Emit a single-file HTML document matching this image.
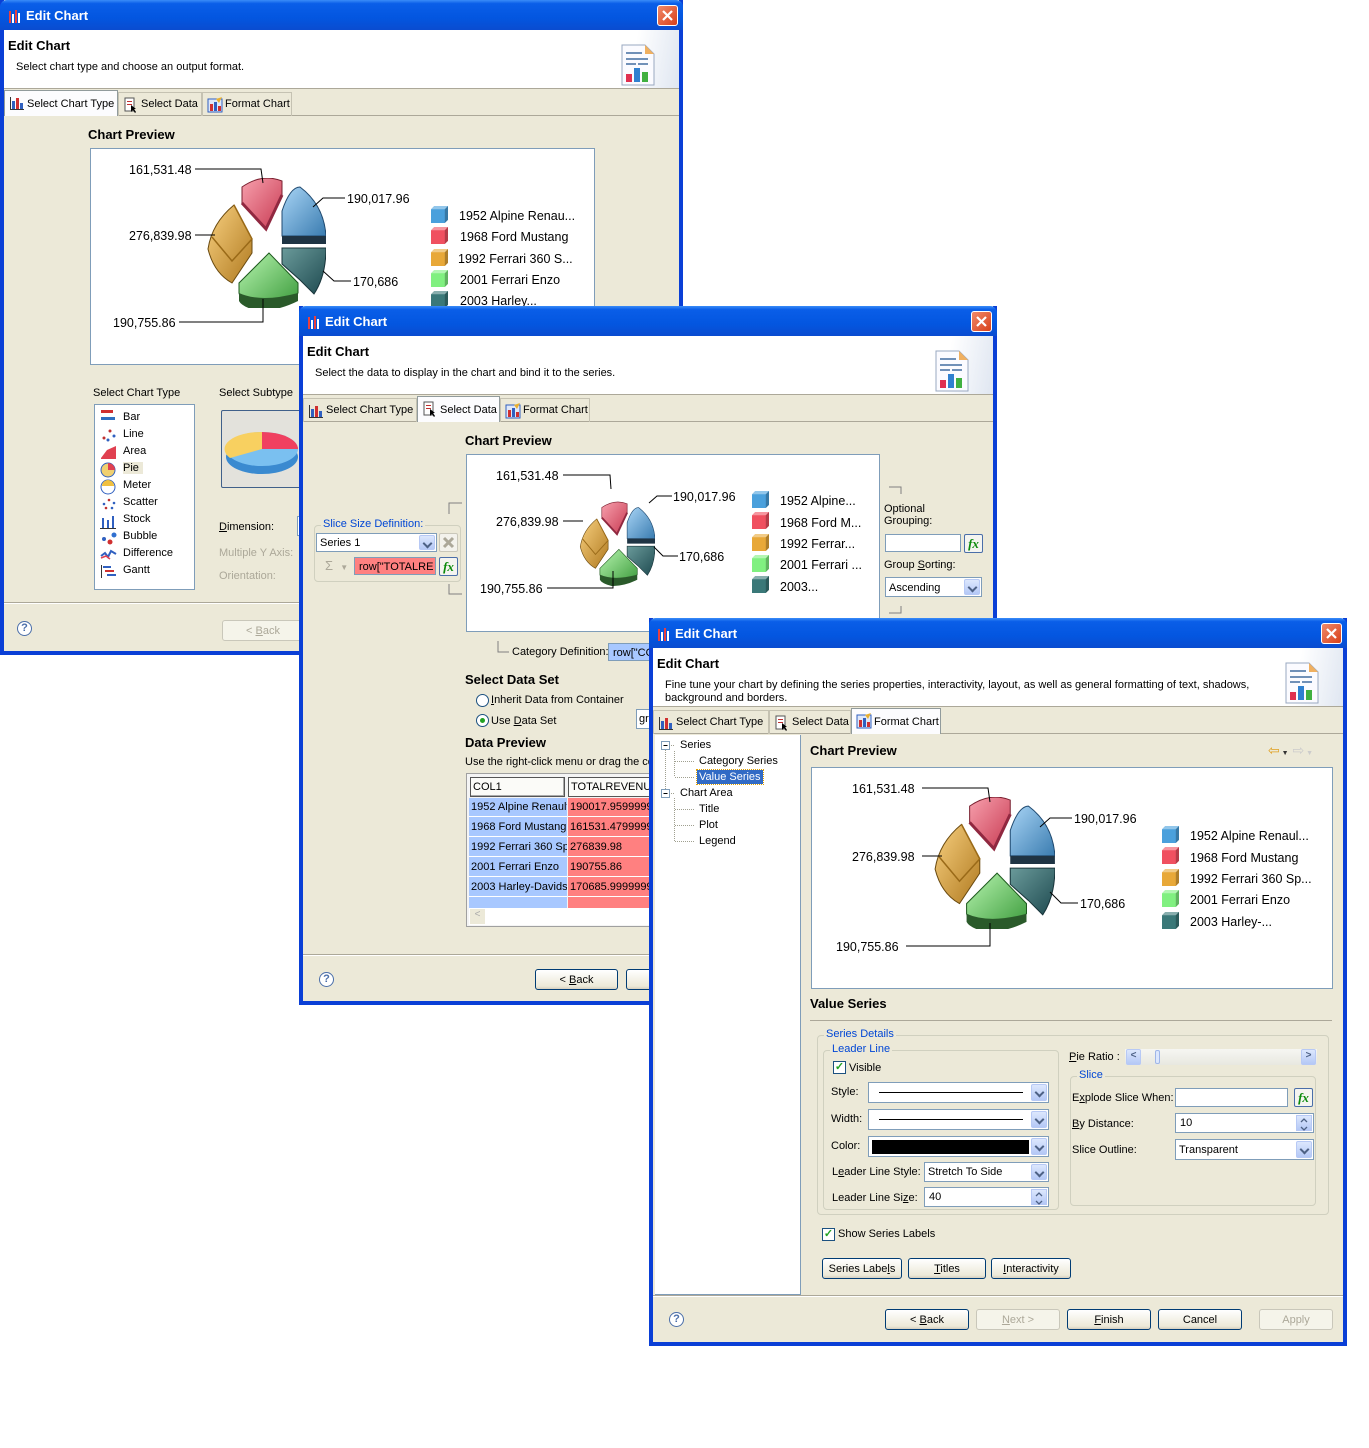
<!DOCTYPE html>
<html><head><meta charset="utf-8">
<style>
*{margin:0;padding:0;box-sizing:border-box}
body{width:1369px;height:1448px;background:#fff;position:relative;overflow:hidden;font-family:"Liberation Sans",sans-serif;font-size:11px;color:#000}
.a{position:absolute}
.win{position:absolute;background:#ece9d8;border:4px solid #0a3fd6;border-top:none;}
.tb{position:absolute;left:-4px;right:-4px;top:0;height:30px;background:linear-gradient(#3a8cf8 0,#0a5ee8 12%,#0356e0 60%,#0a4cd0 100%);border-radius:7px 7px 0 0;color:#fff;font-weight:bold;font-size:13px;}
.tb .t{position:absolute;left:26px;top:8px}
.tb .ic{position:absolute;left:8px;top:9px}
.cl{position:absolute;right:5px;top:5px;width:21px;height:21px;background:linear-gradient(135deg,#f08a6a,#d8401a);border:1px solid #fff;border-radius:3px}
.hd{position:absolute;left:0;right:0;top:30px;height:59px;background:#fff;border-bottom:1px solid #aca899}
.hd b{position:absolute;left:4px;top:8px;font-size:13px}
.hd span{position:absolute;left:12px;top:31px}
.hi{position:absolute;right:0;top:0;width:75px;height:58px;background:linear-gradient(100deg,#fff 40%,#dfe6f1 100%)}
.tabs{position:absolute;left:0;right:0;top:90px;height:26px;border-bottom:1px solid #aca899}
.tab{position:absolute;top:2px;height:24px;border:1px solid #c5c2b2;border-bottom:none;padding:5px 0 0 22px;white-space:nowrap}
.tab.on{top:0;height:26px;background:#fcfcfe;border-color:#919b9c;padding-top:7px}
.tab svg{position:absolute;left:4px;top:4px}
.bold{font-weight:bold;font-size:13px}
.box{position:absolute;background:#fff;border:1px solid #7f9db9}
.btn{position:absolute;height:21px;border:1px solid #003c74;border-radius:3px;background:linear-gradient(#fff,#ece9d8 85%,#d6d0c0);text-align:center;padding-top:4px}
.btn.dis{border-color:#c9c7ba;color:#aca899;background:#f5f4ea}
.dd{position:absolute;right:1px;top:1px;bottom:1px;width:16px;background:linear-gradient(#dce7fd,#b4c8f6);border:1px solid #b7c9f5;border-radius:2px}
.dd:after{content:"";position:absolute;left:4px;top:4px;width:5px;height:5px;border-right:2px solid #4d6185;border-bottom:2px solid #4d6185;transform:rotate(45deg)}
.sp{position:absolute;right:1px;top:1px;bottom:1px;width:16px;background:linear-gradient(#dce7fd,#b4c8f6);border:1px solid #b7c9f5}
.grp{position:absolute;border:1px solid #d0d0bf;border-radius:4px}
.grp>.lg{position:absolute;left:6px;top:-8px;background:#ece9d8;color:#0046d5;padding:0 2px}
.help{position:absolute;width:15px;height:15px;border:1px solid #4a6ea9;border-radius:50%;color:#4a6ea9;font-weight:bold;font-size:11px;text-align:center;line-height:13px;background:#fff}
.sep{position:absolute;left:0;right:0;height:2px;border-top:1px solid #aca899;border-bottom:1px solid #fff}
.fx{position:absolute;width:19px;height:19px;border:1px solid #4a6ea9;border-radius:2px;background:#f4f4f0;color:#0a8a0a;font-style:italic;font-weight:bold;font-family:"Liberation Serif",serif;font-size:13px;text-align:center;line-height:17px}
.chk{position:absolute;width:13px;height:13px;border:1px solid #1c5180;background:#fff;color:#21a121;font-size:11px;line-height:11px;text-align:center;font-weight:bold}
.cell{position:absolute;height:19px;padding:3px 2px;white-space:nowrap;overflow:hidden}
.gray{color:#aca899}
</style></head><body>

<svg width="0" height="0" style="position:absolute">
<defs>
<linearGradient id="gR" x1="0" y1="0" x2="1" y2="1"><stop offset="0" stop-color="#f7a0ad"/><stop offset="1" stop-color="#c83a52"/></linearGradient>
<linearGradient id="gB" x1="0" y1="0" x2="1" y2="1"><stop offset="0" stop-color="#a8d4f5"/><stop offset="1" stop-color="#3a7cb0"/></linearGradient>
<linearGradient id="gT" x1="0" y1="0" x2="1" y2="1"><stop offset="0" stop-color="#6a9a9a"/><stop offset="1" stop-color="#1e4a50"/></linearGradient>
<linearGradient id="gG" x1="0" y1="0" x2="1" y2="1"><stop offset="0" stop-color="#b8f5b0"/><stop offset="1" stop-color="#3a9a3a"/></linearGradient>
<linearGradient id="gO" x1="0" y1="0" x2="1" y2="1"><stop offset="0" stop-color="#f8d080"/><stop offset="1" stop-color="#b07a20"/></linearGradient>
<symbol id="pie" viewBox="-60 -65 120 130">
<g transform="translate(-2,-4)">
<path d="M-22,-52 Q-2,-66 18,-58 L18,-44 L2,-10 L-22,-36 Z" fill="url(#gR)" stroke="#7a2030" stroke-width="1"/>
<path d="M-22,-36 L2,-10 L18,-44" fill="none" stroke="#902840" stroke-width="3"/>
</g>
<g transform="translate(4,-2)">
<path d="M12,-5 L12,-30 Q20,-54 30,-54 Q54,-36 56,-5 Z" fill="url(#gB)" stroke="#204a70"/>
<path d="M12,-5 L56,-5 L56,3 L12,3 Z" fill="#1f3444"/>
</g>
<g transform="translate(4,3)">
<path d="M12,2 L56,2 Q56,30 44,48 L30,34 L12,18 Z" fill="url(#gT)" stroke="#18343a"/>
</g>
<g transform="translate(0,6)">
<path d="M3,4 L32,34 L32,44 Q15,60 -5,58 Q-25,54 -27,44 L-27,34 Z" fill="url(#gG)" stroke="#1e5a1e"/>
<path d="M-27,44 Q-5,54 32,44 L32,52 Q12,62 -8,62 Q-24,58 -27,52 Z" fill="#2a5a2a"/>
</g>
<g transform="translate(-6,0)">
<path d="M-8,-4 L-26,-38 Q-48,-20 -52,6 Q-46,30 -28,40 L-8,10 Z" fill="url(#gO)" stroke="#6a4a10"/>
<path d="M-26,-38 L-8,-4 L-28,18 L-48,-6" fill="none" stroke="#9a6a18" stroke-width="1.5"/>
</g>
</symbol>
<symbol id="cube" viewBox="0 0 16 16">
<path d="M3,0 L16,0 L16,13 L13,16 L0,16 L0,3 Z" fill="currentColor"/>
<path d="M0,3 L3,0 L16,0 L13,3 Z" fill="#fff" opacity=".4"/>
<path d="M13,3 L16,0 L16,13 L13,16 Z" fill="#000" opacity=".25"/>
</symbol>
<symbol id="tabic1" viewBox="0 0 16 16"><rect x="1" y="2" width="1" height="13" fill="#333"/><rect x="1" y="14" width="14" height="1" fill="#333"/><rect x="3" y="6" width="3" height="8" fill="#3060c0"/><rect x="7" y="3" width="3" height="11" fill="#d03030"/><rect x="11" y="8" width="3" height="6" fill="#3060c0"/></symbol>
<symbol id="tabic2" viewBox="0 0 16 16"><rect x="2" y="1" width="9" height="13" fill="#fff" stroke="#555"/><rect x="4" y="4" width="5" height="1" fill="#c03030"/><rect x="4" y="7" width="5" height="1" fill="#c03030"/><path d="M8,8 L8,15 L10,13 L12,16 L13,15 L11,12 L13,12 Z" fill="#000"/></symbol>
<symbol id="tabic3" viewBox="0 0 16 16"><rect x="1" y="2" width="14" height="13" fill="#dfe8f8" stroke="#3060c0"/><rect x="3" y="7" width="3" height="7" fill="#d03030"/><rect x="7" y="5" width="3" height="9" fill="#3060c0"/><rect x="11" y="9" width="3" height="5" fill="#d03030"/><path d="M9,2 L15,0 L12,6 Z" fill="#e8b030"/></symbol>
<symbol id="hdic" viewBox="0 0 34 42"><path d="M1,1 L24,1 L33,10 L33,41 L1,41 Z" fill="#fbfbff" stroke="#9aa8c0"/><path d="M24,1 L24,10 L33,10 Z" fill="#f0b060"/><rect x="5" y="8" width="16" height="2" fill="#7090b8"/><rect x="5" y="14" width="22" height="2" fill="#7090b8"/><rect x="5" y="19" width="10" height="2" fill="#7090b8"/><rect x="17" y="19" width="10" height="2" fill="#7090b8"/><rect x="5" y="30" width="6" height="8" fill="#e03050"/><rect x="13" y="24" width="6" height="14" fill="#3080d0"/><rect x="21" y="28" width="6" height="10" fill="#40b040"/></symbol>
<symbol id="ttl" viewBox="0 0 14 14"><rect x="1" y="2" width="2" height="12" fill="#e84040"/><rect x="4" y="5" width="2" height="9" fill="#fff"/><rect x="7" y="1" width="2" height="13" fill="#e84040"/><rect x="10" y="4" width="2" height="10" fill="#fff"/></symbol>
</defs></svg>

<!-- ================= WINDOW 1 ================= -->
<div class="win" style="left:0;top:0;width:683px;height:655px">
 <div class="tb"><svg class="ic" width="14" height="14"><use href="#ttl"/></svg><span class="t">Edit Chart</span><div class="cl"><svg width="19" height="19"><path d="M5,5 L14,14 M14,5 L5,14" stroke="#fff" stroke-width="2.2"/></svg></div></div>
 <div class="hd"><b>Edit Chart</b><span>Select chart type and choose an output format.</span><div class="hi"><svg class="a" style="left:17px;top:14px" width="34" height="42"><use href="#hdic"/></svg></div></div>
 <div class="tabs">
  <div class="tab on" style="left:0;width:114px"><svg width="16" height="16"><use href="#tabic1"/></svg>Select Chart Type</div>
  <div class="tab" style="left:114px;width:84px"><svg width="16" height="16"><use href="#tabic2"/></svg>Select Data</div>
  <div class="tab" style="left:198px;width:90px"><svg width="16" height="16"><use href="#tabic3"/></svg>Format Chart</div>
 </div>
 <div class="a bold" style="left:84px;top:127px">Chart Preview</div>
 <div class="box" style="left:86px;top:148px;width:505px;height:217px">
  <svg class="a" style="left:0;top:0" width="505" height="217" font-family="Liberation Sans" font-size="12.5">
   <use href="#pie" x="115" y="29" width="120" height="130"/>
   <g stroke="#000" fill="none"><path d="M104,20 H170 L172,34"/><path d="M104,86 H124"/><path d="M254,49 H232 L222,58"/><path d="M260,132 H243 L232,122"/><path d="M88,173 H172 V150"/></g>
   <text x="38" y="25">161,531.48</text><text x="38" y="91">276,839.98</text><text x="256" y="54">190,017.96</text><text x="262" y="137">170,686</text><text x="22" y="178">190,755.86</text>
   <g><svg x="340" y="57" width="17" height="17" color="#4aa0dc"><use href="#cube"/></svg><svg x="340" y="78" width="17" height="17" color="#f05060"><use href="#cube"/></svg><svg x="340" y="100" width="17" height="17" color="#e8a838"><use href="#cube"/></svg><svg x="340" y="121" width="17" height="17" color="#80f080"><use href="#cube"/></svg><svg x="340" y="142" width="17" height="17" color="#3a7878"><use href="#cube"/></svg></g>
   <text x="368" y="71">1952 Alpine Renau...</text><text x="369" y="92">1968 Ford Mustang</text><text x="367" y="114">1992 Ferrari 360 S...</text><text x="369" y="135">2001 Ferrari Enzo</text><text x="369" y="156">2003 Harley...</text>
  </svg>
 </div>
 <div class="a" style="left:89px;top:387px">Select Chart Type</div>
 <div class="box" style="left:90px;top:404px;width:101px;height:186px">
  <div class="a" style="left:28px;top:4px;line-height:17px">Bar<br>Line<br>Area<br><span style="background:#ece9d8;padding:0 4px 0 0">Pie</span><br>Meter<br>Scatter<br>Stock<br>Bubble<br>Difference<br>Gantt</div>
  <svg class="a" style="left:5px;top:3px" width="18" height="172">
   <g fill="#d03030"><rect x="1" y="2" width="12" height="3"/><rect x="1" y="9" width="14" height="3" fill="#3070c0"/></g>
   <g fill="#c03030"><circle cx="4" cy="30" r="1.5"/><circle cx="10" cy="23" r="1.5"/><circle cx="14" cy="28" r="1.5" fill="#3060c0"/><circle cx="8" cy="32" r="1.5" fill="#3060c0"/></g>
   <path d="M1,50 L7,42 L16,38 L16,51 L1,51 Z" fill="#e04050"/>
   <circle cx="8" cy="62" r="7" fill="#f0d070" stroke="#3060c0"/><path d="M8,62 L8,55 A7,7 0 0 1 15,62 Z" fill="#e04050"/>
   <circle cx="8" cy="79" r="7" fill="#fff" stroke="#3060c0"/><path d="M2,78 A6,6 0 0 1 14,78 Z" fill="#f0c040"/>
   <g fill="#3060c0"><circle cx="4" cy="96" r="1.3"/><circle cx="9" cy="92" r="1.3" fill="#c03030"/><circle cx="14" cy="95" r="1.3"/><circle cx="6" cy="100" r="1.3" fill="#c03030"/><circle cx="12" cy="100" r="1.3"/></g>
   <g fill="#3060c0"><rect x="2" y="110" width="2" height="10"/><rect x="7" y="112" width="2" height="8"/><rect x="12" y="108" width="2" height="12"/><rect x="0" y="120" width="16" height="1" fill="#333"/></g>
   <g><circle cx="4" cy="131" r="2" fill="#3060c0"/><circle cx="10" cy="134" r="2.5" fill="#d03030"/><circle cx="14" cy="127" r="2.5" fill="#3070d0"/></g>
   <path d="M1,148 L5,145 L8,149 L11,143 L16,146" stroke="#3060c0" stroke-width="2" fill="none"/><path d="M1,150 L6,148 L10,151" stroke="#e04050" stroke-width="1.5" fill="none"/>
   <g><rect x="3" y="158" width="8" height="2" fill="#3060c0"/><rect x="5" y="162" width="9" height="2" fill="#d03030"/><rect x="7" y="166" width="9" height="2" fill="#3060c0"/><rect x="1" y="157" width="1" height="13" fill="#333"/></g>
  </svg>
 </div>
 <div class="a" style="left:215px;top:387px">Select Subtype</div>
 <div class="a" style="left:217px;top:410px;width:81px;height:78px;border:1px solid #40608a;background:#e3e2dc;border-radius:2px">
  <svg width="80" height="76"><ellipse cx="40" cy="46" rx="36" ry="17" fill="#3a8ad0"/><ellipse cx="40" cy="38" rx="36" ry="17" fill="#7ac0f0"/><path d="M40,38 L40,21 A36,17 0 0 1 76,38 Z" fill="#f04060"/><path d="M40,38 L40,21 A36,17 0 0 0 8,47 Z" fill="#f8d060"/></svg>
 </div>
 <div class="a" style="left:215px;top:521px"><u>D</u>imension:</div>
 <div class="a gray" style="left:215px;top:547px">Multiple Y Axis:</div>
 <div class="a gray" style="left:215px;top:570px">Orientation:</div>
 <div class="a" style="left:293px;top:516px;width:6px;height:20px;border:1px solid #7f9db9;border-right:none;background:#fff"></div>
 <div class="sep" style="top:602px"></div>
 <div class="help" style="left:13px;top:621px">?</div>
 <div class="btn dis" style="left:218px;top:620px;width:82px">&lt; <u>B</u>ack</div>
</div>

<!-- ================= WINDOW 2 ================= -->
<div class="win" style="left:299px;top:306px;width:698px;height:699px">
 <div class="tb"><svg class="ic" width="14" height="14"><use href="#ttl"/></svg><span class="t">Edit Chart</span><div class="cl"><svg width="19" height="19"><path d="M5,5 L14,14 M14,5 L5,14" stroke="#fff" stroke-width="2.2"/></svg></div></div>
 <div class="hd"><b>Edit Chart</b><span>Select the data to display in the chart and bind it to the series.</span><div class="hi"><svg class="a" style="left:17px;top:14px" width="34" height="42"><use href="#hdic"/></svg></div></div>
 <div class="tabs">
  <div class="tab" style="left:0;width:114px"><svg width="16" height="16"><use href="#tabic1"/></svg>Select Chart Type</div>
  <div class="tab on" style="left:114px;width:83px"><svg width="16" height="16"><use href="#tabic2"/></svg>Select Data</div>
  <div class="tab" style="left:197px;width:90px"><svg width="16" height="16"><use href="#tabic3"/></svg>Format Chart</div>
 </div>
 <div class="a bold" style="left:162px;top:127px">Chart Preview</div>
 <div class="box" style="left:163px;top:148px;width:414px;height:178px">
  <svg class="a" style="left:0;top:0" width="414" height="178" font-family="Liberation Sans" font-size="12.5">
   <use href="#pie" x="112" y="26" width="76" height="124" preserveAspectRatio="none"/>
   <g stroke="#000" fill="none"><path d="M96,20 H143 L144,34"/><path d="M96,66 H116"/><path d="M205,41 H190 L182,48"/><path d="M211,101 H196 L187,92"/><path d="M80,133 H146 V116"/></g>
   <text x="29" y="25">161,531.48</text><text x="29" y="71">276,839.98</text><text x="206" y="46">190,017.96</text><text x="212" y="106">170,686</text><text x="13" y="138">190,755.86</text>
   <svg x="285" y="36" width="17" height="17" color="#4aa0dc"><use href="#cube"/></svg><svg x="285" y="57" width="17" height="17" color="#f05060"><use href="#cube"/></svg><svg x="285" y="79" width="17" height="17" color="#e8a838"><use href="#cube"/></svg><svg x="285" y="100" width="17" height="17" color="#80f080"><use href="#cube"/></svg><svg x="285" y="121" width="17" height="17" color="#3a7878"><use href="#cube"/></svg>
   <text x="313" y="50">1952 Alpine...</text><text x="313" y="72">1968 Ford M...</text><text x="313" y="93">1992 Ferrar...</text><text x="313" y="114">2001 Ferrari ...</text><text x="313" y="136">2003...</text>
  </svg>
 </div>
 <svg class="a" style="left:145px;top:196px" width="16" height="94"><path d="M1,12 V1 H14 M1,82 V92 H14" stroke="#808080" fill="none"/></svg>
 <div class="grp" style="left:11px;top:219px;width:147px;height:57px"><span class="lg">Slice Size Definition:</span></div>
 <div class="box" style="left:13px;top:227px;width:121px;height:19px;padding:3px 3px">Series 1<div class="dd"></div></div>
 <div class="a" style="left:136px;top:227px;width:19px;height:19px;border:1px solid #c9c7ba;border-radius:2px;background:#f3f2ec"><svg width="17" height="17"><path d="M4,4 L13,13 M13,4 L4,13" stroke="#aca899" stroke-width="3"/></svg></div>
 <div class="a gray" style="left:22px;top:252px;font-size:13px">Σ &nbsp;<span style="font-size:8px">▼</span></div>
 <div class="a" style="left:51px;top:251px;width:82px;height:18px;background:#ff8080;border:1px solid #7f9db9;padding:3px 4px;overflow:hidden;white-space:nowrap">row["TOTALRE</div>
 <div class="fx" style="left:136px;top:251px">fx</div>
 <svg class="a" style="left:585px;top:180px" width="16" height="130"><path d="M1,1 H13 V8 M1,127 H13 V120" stroke="#808080" fill="none"/></svg>
 <div class="a" style="left:581px;top:197px;line-height:12px">Optional<br>Grouping:</div>
 <div class="box" style="left:582px;top:228px;width:76px;height:18px"></div>
 <div class="fx" style="left:661px;top:228px">fx</div>
 <div class="a" style="left:581px;top:253px">Group <u>S</u>orting:</div>
 <div class="box" style="left:582px;top:271px;width:97px;height:20px;padding:4px 3px">Ascending<div class="dd"></div></div>
 <svg class="a" style="left:194px;top:334px" width="16" height="16"><path d="M1,1 V12 H12" stroke="#808080" fill="none"/></svg>
 <div class="a" style="left:209px;top:340px">Category Definition:</div>
 <div class="a" style="left:305px;top:337px;width:50px;height:18px;background:#a8c8ff;border:1px solid #7f9db9;padding:3px 4px;white-space:nowrap;overflow:hidden">row["CO</div>
 <div class="a bold" style="left:162px;top:366px">Select Data Set</div>
 <div class="a" style="left:173px;top:388px;width:13px;height:13px;border:1px solid #1c5180;border-radius:50%;background:#fff"></div>
 <div class="a" style="left:188px;top:388px"><u>I</u>nherit Data from Container</div>
 <div class="a" style="left:173px;top:408px;width:13px;height:13px;border:1px solid #1c5180;border-radius:50%;background:#fff"><div class="a" style="left:3px;top:3px;width:5px;height:5px;border-radius:50%;background:#21a121"></div></div>
 <div class="a" style="left:188px;top:409px">Use <u>D</u>ata Set</div>
 <div class="box" style="left:333px;top:403px;width:20px;height:20px;padding:3px 2px">gr</div>
 <div class="a bold" style="left:162px;top:429px">Data Preview</div>
 <div class="a" style="left:162px;top:450px;white-space:nowrap;width:188px;overflow:hidden">Use the right-click menu or drag the co</div>
 <div class="a" style="left:163px;top:467px;width:190px;height:154px;border:1px solid #a0a0a0;background:#f4f4f4;overflow:hidden">
  <div class="cell" style="left:3px;top:3px;width:95px;height:20px;border:1px solid #555;background:#fbfbf8;box-shadow:inset -1px -1px #aaa">COL1</div>
  <div class="cell" style="left:101px;top:3px;width:95px;height:20px;border:1px solid #555;background:#fbfbf8">TOTALREVENUE</div>
  <div class="a" style="left:2px;top:24px;width:98px;height:110px;background:#a8c8ff"></div>
  <div class="a" style="left:101px;top:24px;width:90px;height:110px;background:#ff8080"></div>
  <div class="cell" style="left:2px;top:24px;width:98px;border-bottom:1px solid #fff">1952 Alpine Renault</div><div class="cell" style="left:101px;top:24px;width:90px;border-bottom:1px solid #fff">190017.9599999</div>
  <div class="cell" style="left:2px;top:44px;width:98px;border-bottom:1px solid #fff">1968 Ford Mustang</div><div class="cell" style="left:101px;top:44px;width:90px;border-bottom:1px solid #fff">161531.4799999</div>
  <div class="cell" style="left:2px;top:64px;width:98px;border-bottom:1px solid #fff">1992 Ferrari 360 Spi</div><div class="cell" style="left:101px;top:64px;width:90px;border-bottom:1px solid #fff">276839.98</div>
  <div class="cell" style="left:2px;top:84px;width:98px;border-bottom:1px solid #fff">2001 Ferrari Enzo</div><div class="cell" style="left:101px;top:84px;width:90px;border-bottom:1px solid #fff">190755.86</div>
  <div class="cell" style="left:2px;top:104px;width:98px;border-bottom:1px solid #fff">2003 Harley-Davidsc</div><div class="cell" style="left:101px;top:104px;width:90px;border-bottom:1px solid #fff">170685.9999999</div>
  <div class="a" style="left:2px;top:134px;width:190px;height:17px;background:#fff"><div class="a" style="left:1px;top:1px;width:15px;height:15px;background:#ece9d8;color:#aaa;text-align:center;font-size:10px">&lt;</div></div>
 </div>
 <div class="sep" style="top:648px"></div>
 <div class="help" style="left:16px;top:666px">?</div>
 <div class="btn" style="left:232px;top:663px;width:83px">&lt; <u>B</u>ack</div>
 <div class="btn" style="left:323px;top:663px;width:83px"></div>
</div>

<!-- ================= WINDOW 3 ================= -->
<div class="win" style="left:649px;top:618px;width:698px;height:728px">
 <div class="tb"><svg class="ic" width="14" height="14"><use href="#ttl"/></svg><span class="t">Edit Chart</span><div class="cl"><svg width="19" height="19"><path d="M5,5 L14,14 M14,5 L5,14" stroke="#fff" stroke-width="2.2"/></svg></div></div>
 <div class="hd"><b>Edit Chart</b><span style="top:31px;line-height:13px;width:600px">Fine tune your chart by defining the series properties, interactivity, layout, as well as general formatting of text, shadows, background and borders.</span><div class="hi"><svg class="a" style="left:17px;top:14px" width="34" height="42"><use href="#hdic"/></svg></div></div>
 <div class="tabs">
  <div class="tab" style="left:0;width:116px"><svg width="16" height="16"><use href="#tabic1"/></svg>Select Chart Type</div>
  <div class="tab" style="left:116px;width:82px"><svg width="16" height="16"><use href="#tabic2"/></svg>Select Data</div>
  <div class="tab on" style="left:198px;width:90px"><svg width="16" height="16"><use href="#tabic3"/></svg>Format Chart</div>
 </div>
 <div class="a" style="left:2px;top:117px;width:146px;height:560px;background:#fff;border-right:1px solid #7f9db9;border-bottom:1px solid #7f9db9">
  <svg class="a" style="left:0;top:0" width="140" height="140"><g stroke="#a0a090" stroke-dasharray="1,1" fill="none"><path d="M10.5,15 V56 M14,10.5 H20 M19.5,16 V42 M20,26.5 H40 M20,42.5 H40 M14,58.5 H20 M19.5,63 V106 M20,74.5 H40 M20,90.5 H40 M20,106.5 H40"/></g>
   <rect x="6.5" y="6.5" width="8" height="8" fill="#fff" stroke="#7f9db9"/><path d="M8.5,10.5 H12.5" stroke="#000"/>
   <rect x="6.5" y="54.5" width="8" height="8" fill="#fff" stroke="#7f9db9"/><path d="M8.5,58.5 H12.5" stroke="#000"/></svg>
  <div class="a" style="left:25px;top:4px">Series</div>
  <div class="a" style="left:44px;top:20px">Category Series</div>
  <div class="a" style="left:42px;top:35px;background:#316ac5;color:#fff;padding:1px 2px;outline:1px dotted #e0a000">Value Series</div>
  <div class="a" style="left:25px;top:52px">Chart Area</div>
  <div class="a" style="left:44px;top:68px">Title</div>
  <div class="a" style="left:44px;top:84px">Plot</div>
  <div class="a" style="left:44px;top:100px">Legend</div>
 </div>
 <div class="a bold" style="left:157px;top:125px">Chart Preview</div>
 <div class="a" style="left:615px;top:124px;color:#e0a020;font-size:14px">⇦<span style="color:#333;font-size:7px"> ▼</span> <span style="color:#ccc">⇨</span><span style="color:#ccc;font-size:7px"> ▼</span></div>
 <div class="box" style="left:158px;top:149px;width:522px;height:222px">
  <svg class="a" style="left:6px;top:0" width="516" height="222" font-family="Liberation Sans" font-size="12.5">
   <use href="#pie" x="115" y="29" width="122" height="132"/>
   <g stroke="#000" fill="none"><path d="M104,20 H170 L172,34"/><path d="M104,88 H124"/><path d="M254,50 H232 L222,59"/><path d="M260,135 H243 L232,124"/><path d="M88,178 H172 V155"/></g>
   <text x="34" y="25">161,531.48</text><text x="34" y="93">276,839.98</text><text x="256" y="55">190,017.96</text><text x="262" y="140">170,686</text><text x="18" y="183">190,755.86</text>
   <svg x="344" y="58" width="17" height="17" color="#4aa0dc"><use href="#cube"/></svg><svg x="344" y="79" width="17" height="17" color="#f05060"><use href="#cube"/></svg><svg x="344" y="101" width="17" height="17" color="#e8a838"><use href="#cube"/></svg><svg x="344" y="122" width="17" height="17" color="#80f080"><use href="#cube"/></svg><svg x="344" y="144" width="17" height="17" color="#3a7878"><use href="#cube"/></svg>
   <text x="372" y="72">1952 Alpine Renaul...</text><text x="372" y="94">1968 Ford Mustang</text><text x="372" y="115">1992 Ferrari 360 Sp...</text><text x="372" y="136">2001 Ferrari Enzo</text><text x="372" y="158">2003 Harley-...</text>
  </svg>
 </div>
 <div class="a bold" style="left:157px;top:378px">Value Series</div>
 <div class="a" style="left:157px;top:402px;width:522px;height:1px;background:#aca899"></div>
 <div class="grp" style="left:164px;top:417px;width:512px;height:180px"><span class="lg">Series Details</span></div>
 <div class="grp" style="left:170px;top:432px;width:236px;height:160px"><span class="lg">Leader Line</span></div>
 <div class="chk" style="left:180px;top:443px">✓</div><div class="a" style="left:196px;top:444px">Visible</div>
 <div class="a" style="left:178px;top:468px">Style:</div>
 <div class="box" style="left:215px;top:464px;width:181px;height:21px"><div class="a" style="left:10px;top:9px;width:144px;height:1px;background:#000"></div><div class="dd"></div></div>
 <div class="a" style="left:178px;top:495px">Width:</div>
 <div class="box" style="left:215px;top:491px;width:181px;height:21px"><div class="a" style="left:10px;top:9px;width:144px;height:1px;background:#000"></div><div class="dd"></div></div>
 <div class="a" style="left:178px;top:522px">Color:</div>
 <div class="box" style="left:215px;top:518px;width:181px;height:21px"><div class="a" style="left:3px;top:3px;width:157px;height:14px;background:#000"></div><div class="dd"></div></div>
 <div class="a" style="left:179px;top:548px">L<u>e</u>ader Line Style:</div>
 <div class="box" style="left:271px;top:544px;width:125px;height:20px;padding:3px 3px">Stretch To Side<div class="dd"></div></div>
 <div class="a" style="left:179px;top:574px">Leader Line Si<u>z</u>e:</div>
 <div class="box" style="left:271px;top:569px;width:125px;height:20px;padding:3px 4px">40<div class="sp"><svg width="14" height="16"><path d="M4,6 L7,3 L10,6 M4,11 L7,14 L10,11" stroke="#4d6185" fill="none" stroke-width="1.3"/></svg></div></div>
 <div class="a" style="left:416px;top:433px"><u>P</u>ie Ratio :</div>
 <div class="a" style="left:472px;top:431px;width:192px;height:16px;background:linear-gradient(#f6f6f2,#e8e8e0)">
  <div class="a" style="left:1px;top:0;width:15px;height:16px;background:linear-gradient(#dce7fd,#b4c8f6);border:1px solid #b7c9f5;border-radius:2px;color:#4d6185;font-size:10px;text-align:center;font-weight:bold">&lt;</div>
  <div class="a" style="left:30px;top:1px;width:5px;height:14px;background:#dce7fd;border:1px solid #9fb6e8;border-radius:2px"></div>
  <div class="a" style="right:1px;top:0;width:15px;height:16px;background:linear-gradient(#dce7fd,#b4c8f6);border:1px solid #b7c9f5;border-radius:2px;color:#4d6185;font-size:10px;text-align:center;font-weight:bold">&gt;</div>
 </div>
 <div class="grp" style="left:417px;top:458px;width:246px;height:130px"><span class="lg">Slice</span></div>
 <div class="a" style="left:419px;top:474px">E<u>x</u>plode Slice When:</div>
 <div class="box" style="left:522px;top:470px;width:113px;height:19px"></div>
 <div class="fx" style="left:641px;top:470px">fx</div>
 <div class="a" style="left:419px;top:500px"><u>B</u>y Distance:</div>
 <div class="box" style="left:522px;top:495px;width:139px;height:20px;padding:3px 4px">10<div class="sp"><svg width="14" height="16"><path d="M4,6 L7,3 L10,6 M4,11 L7,14 L10,11" stroke="#4d6185" fill="none" stroke-width="1.3"/></svg></div></div>
 <div class="a" style="left:419px;top:526px">Slice Outline:</div>
 <div class="box" style="left:522px;top:521px;width:139px;height:21px;padding:4px 3px">Transparent<div class="dd"></div></div>
 <div class="chk" style="left:169px;top:610px">✓</div><div class="a" style="left:185px;top:610px">Show Series Labels</div>
 <div class="btn" style="left:169px;top:640px;width:80px">Series Labe<u>l</u>s</div>
 <div class="btn" style="left:255px;top:640px;width:78px"><u>T</u>itles</div>
 <div class="btn" style="left:338px;top:640px;width:80px"><u>I</u>nteractivity</div>
 <div class="sep" style="top:677px"></div>
 <div class="help" style="left:16px;top:694px">?</div>
 <div class="btn" style="left:232px;top:691px;width:84px">&lt; <u>B</u>ack</div>
 <div class="btn dis" style="left:323px;top:691px;width:84px"><u>N</u>ext &gt;</div>
 <div class="btn" style="left:414px;top:691px;width:84px"><u>F</u>inish</div>
 <div class="btn" style="left:505px;top:691px;width:84px">Cancel</div>
 <div class="btn dis" style="left:606px;top:691px;width:74px">Apply</div>
</div>

</body></html>
